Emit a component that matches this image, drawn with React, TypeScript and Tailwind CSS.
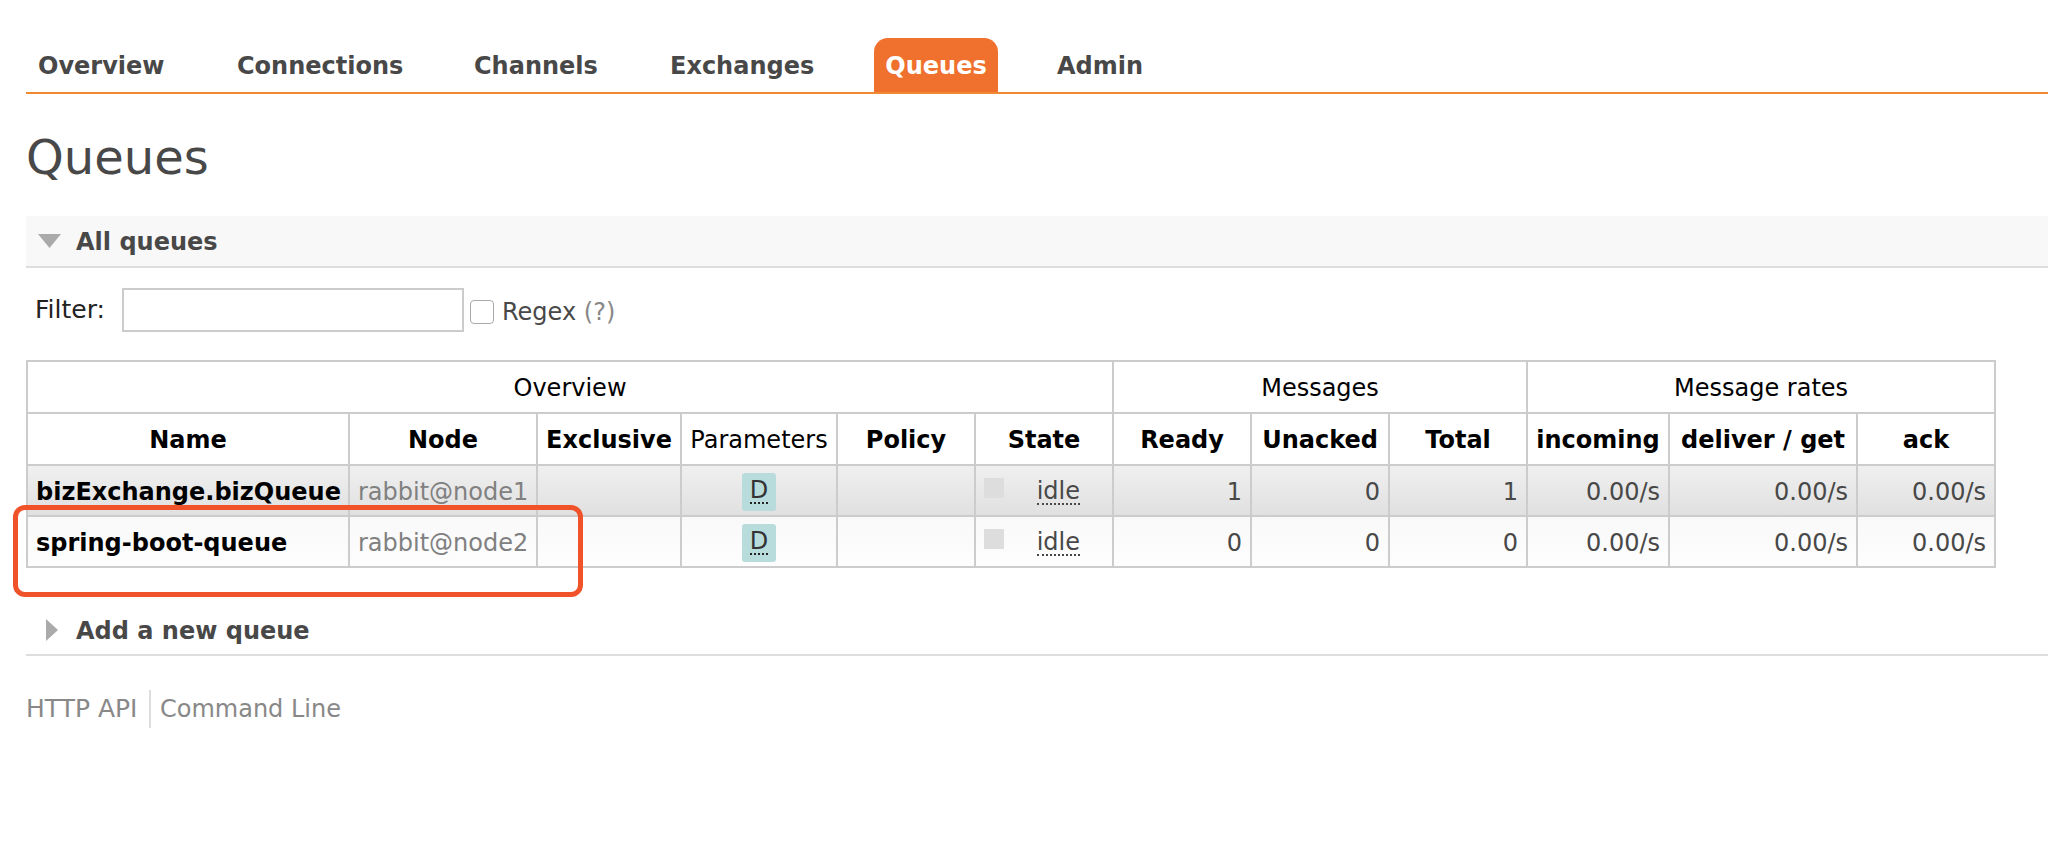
const font = "font-['DejaVu_Sans',sans-serif]";

const tabs = [
  { label: "Overview", cls: "w-[199px] pl-3" },
  { label: "Connections", cls: "w-[237px] pl-3" },
  { label: "Channels", cls: "w-[196px] pl-3" },
  { label: "Exchanges", cls: "w-[216px] pl-3" },
];

const cols = [
  { label: "Name", w: "w-[322px]" },
  { label: "Node", w: "w-[188px]" },
  { label: "Exclusive", w: "w-[144px]" },
  { label: "Parameters", w: "w-[156px]", normal: true },
  { label: "Policy", w: "w-[138px]" },
  { label: "State", w: "w-[138px]" },
  { label: "Ready", w: "w-[138px]" },
  { label: "Unacked", w: "w-[138px]" },
  { label: "Total", w: "w-[138px]" },
  { label: "incoming", w: "w-[142px]" },
  { label: "deliver / get", w: "w-[188px]" },
  { label: "ack", w: "w-[138px]" },
];

const rows = [
  { name: "bizExchange.bizQueue", node: "rabbit@node1", ready: 1, unacked: 0, total: 1, bg: "bg-gradient-to-b from-[#f0f0f0] to-[#e0e0e0]" },
  { name: "spring-boot-queue", node: "rabbit@node2", ready: 0, unacked: 0, total: 0, bg: "bg-gradient-to-b from-[#f9f9f9] to-[#fdfdfd]" },
];

const cell = "border-2 border-[#cccccc] px-2 pt-[2px] pb-0";
const num = `${cell} text-right text-[#484848]`;

export default function App() {
  return (
    <div className={`relative min-h-[842px] bg-white pl-[26px] pt-[38px] text-[#484848] ${font}`}>
      {/* Nav */}
      <nav className="flex h-[56px] items-center border-b-2 border-[#f08a30] text-[24px] font-bold leading-none">
        {tabs.map((t) => (
          <div key={t.label} className={`${t.cls} pt-[1px]`}>{t.label}</div>
        ))}
        <div className="flex h-full w-[124px] items-center justify-center rounded-t-[14px] bg-[#f0702e] pt-[1px] text-white">Queues</div>
        <div className="pl-[59px] pt-[1px]">Admin</div>
      </nav>

      <h1 className="mt-[34px] text-[48px] font-normal leading-[58px]">Queues</h1>

      {/* All queues */}
      <div className="mt-[30px] flex h-[52px] items-center border-b-2 border-[#dddddd] bg-[#f8f8f8] pl-3 text-[24px] font-bold">
        <svg width="24" height="16" viewBox="0 0 24 16" className="mr-[14px]">
          <path d="M0 1h23L11.5 15z" fill="#aaaaaa" />
        </svg>
        <span className="pt-[2px]">All queues</span>
      </div>

      {/* Filter */}
      <div className="mt-[20px] flex h-[44px] items-center text-[24px]">
        <span className="ml-[9px] w-[87px] text-[25px] text-[#222222]">Filter:</span>
        <div className="h-[44px] w-[342px] border-2 border-[#cccccc] bg-white"></div>
        <div className="ml-[6px] mt-[3px] h-[24px] w-[24px] rounded-[4px] border border-[#aaaaaa] bg-white"></div>
        <span className="ml-[8px] mt-[3px] text-[#484848]">Regex <span className="text-[#888888]">(?)</span></span>
      </div>

      {/* Queue table */}
      <table className="mt-[28px] w-[1968px] table-fixed border-collapse text-[24px] leading-none">
        <colgroup>
          {cols.map((c) => (
            <col key={c.label} className={c.w} />
          ))}
        </colgroup>
        <thead>
          <tr className="h-[52px] text-black">
            <th colSpan={6} className={`${cell} font-normal`}>Overview</th>
            <th colSpan={3} className={`${cell} font-normal`}>Messages</th>
            <th colSpan={3} className={`${cell} font-normal`}>Message rates</th>
          </tr>
          <tr className="h-[52px] text-black">
            {cols.map((c) => (
              <th key={c.label} className={`${cell} ${c.normal ? "font-normal" : "font-bold"} whitespace-nowrap px-0`}>{c.label}</th>
            ))}
          </tr>
        </thead>
        <tbody>
          {rows.map((r) => (
            <tr key={r.name} className={`h-[51px] ${r.bg}`}>
              <td className={`${cell} whitespace-nowrap font-bold text-black`}>{r.name}</td>
              <td className={`${cell} whitespace-nowrap text-[#808080]`}>{r.node}</td>
              <td className={cell}></td>
              <td className={`${cell} text-center`}>
                <span className="inline-flex h-[38px] w-[34px] items-center justify-center rounded-[3px] bg-[#b8dcdc] pb-[2px]">
                  <span className="border-b-2 border-dotted border-[#222222] leading-[24px] text-[#333333]">D</span>
                </span>
              </td>
              <td className={cell}></td>
              <td className={cell}>
                <div className="flex items-center justify-between pr-[24px]">
                  <span className="mb-[8px] h-[20px] w-[20px] bg-[#dddddd]"></span>
                  <span className="border-b-2 border-dotted border-[#484848] leading-[24px]">idle</span>
                </div>
              </td>
              <td className={num}>{r.ready}</td>
              <td className={num}>{r.unacked}</td>
              <td className={num}>{r.total}</td>
              <td className={num}>0.00/s</td>
              <td className={num}>0.00/s</td>
              <td className={num}>0.00/s</td>
            </tr>
          ))}
        </tbody>
      </table>

      {/* Add a new queue */}
      <div className="mt-[40px] flex h-[48px] items-center border-b-2 border-[#dddddd] pl-5 text-[24px] font-bold">
        <svg width="12" height="22" viewBox="0 0 12 22" className="mb-[3px] mr-[18px]">
          <path d="M0 0l12 11L0 22z" fill="#aaaaaa" />
        </svg>
        Add a new queue
      </div>

      {/* Footer links */}
      <div className="mt-[34px] flex h-[38px] items-center text-[24px] text-[#888888]">
        <span className="w-[123px] text-[25px]">HTTP API</span>
        <span className="h-full border-l-2 border-[#dddddd] pl-[9px] leading-[38px]">Command Line</span>
      </div>

      {/* Red annotation */}
      <div className="absolute left-[13px] top-[505px] h-[92px] w-[570px] rounded-[12px] border-[5px] border-[#f0532a]"></div>
    </div>
  );
}
